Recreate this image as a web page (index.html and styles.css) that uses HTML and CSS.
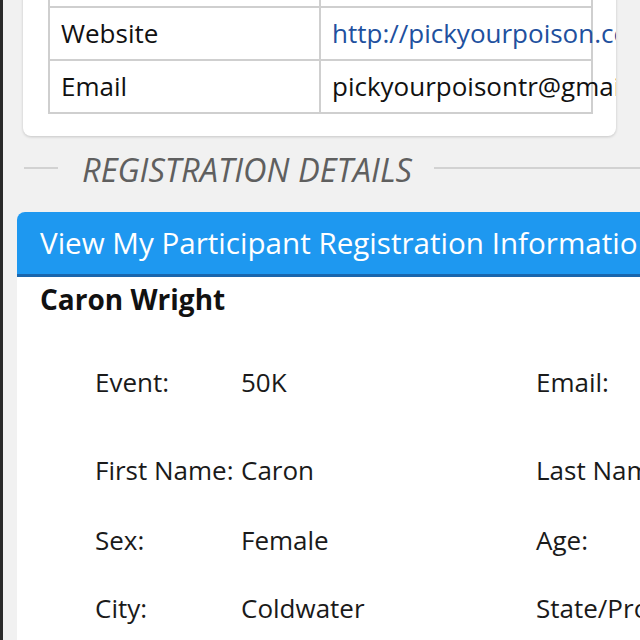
FILE: index.html
```html
<!DOCTYPE html>
<html>
<head>
<meta charset="utf-8">
<link rel="stylesheet" href="styles.css">
</head>
<body>
<div class="screen">
  <div class="card">
    <table class="info">
      <tr class="prev"><td></td><td></td></tr>
      <tr><td>Website</td><td><span class="link">http://pickyourpoison.com</span></td></tr>
      <tr><td>Email</td><td>pickyourpoisontr@gmail.com</td></tr>
    </table>
  </div>
  <div class="section-title">
    <span class="rule short"></span>
    <span class="title-text">REGISTRATION DETAILS</span>
    <span class="rule long"></span>
  </div>
  <div class="panel">
    <div class="panel-head">View My Participant Registration Information</div>
    <div class="panel-body">
      <div class="name">Caron Wright</div>
      <div class="details">
        <div class="row first">
          <span class="label">Event:</span><span class="value">50K</span><span class="label2">Email:</span>
        </div>
        <div class="row">
          <span class="label">First Name:</span><span class="value">Caron</span><span class="label2">Last Name:</span>
        </div>
        <div class="row">
          <span class="label">Sex:</span><span class="value">Female</span><span class="label2">Age:</span>
        </div>
        <div class="row">
          <span class="label">City:</span><span class="value">Coldwater</span><span class="label2">State/Province:</span>
        </div>
      </div>
    </div>
  </div>
</div>
</body>
</html>
```

FILE: styles.css
```css
html, body {
  margin: 0;
  padding: 0;
}
body {
  width: 640px;
  height: 640px;
  overflow: hidden;
  background: #f1f1f1;
  font-family: "Open Sans", "Liberation Sans", sans-serif;
  color: #111;
}
.screen {
  border-left: 3px solid #2a2a2a;
  height: 640px;
  box-sizing: border-box;
  padding-left: 14px;
  overflow: hidden;
}
.card {
  margin-left: 6px;
  width: 593px;
  box-sizing: border-box;
  margin-top: -45px;
  background: #fff;
  border-radius: 0 0 8px 8px;
  box-shadow: 0 1px 3px rgba(0,0,0,0.18);
  padding: 0 23px 22px 25px;
  overflow: hidden;
}
.info {
  width: 545px;
  table-layout: fixed;
  border-collapse: collapse;
  font-size: 26px;
}
.info td {
  border: 2px solid #cfcfcf;
  height: 49px;
  padding: 0 0 2px 11px;
  white-space: nowrap;
  overflow: visible;
  vertical-align: middle;
}
.info td:first-child {
  width: 258px;
}
.info tr.prev td {
  border-top: none;
}
.link {
  color: #21509e;
}
.section-title {
  display: flex;
  align-items: center;
  height: 64px;
  margin: 0 0 12px 7px;
}
.rule {
  height: 2px;
  background: #d2d2d2;
}
.rule.short {
  width: 34px;
}
.rule.long {
  flex: 1;
}
.title-text {
  font-style: italic;
  font-weight: 400;
  font-size: 32.6px;
  color: #5f5f5f;
  padding: 0 22px 0 24px;
  white-space: nowrap;
  margin-top: 2px;
}
.panel {
  background: #fff;
  border-radius: 8px 0 0 0;
  height: 460px;
}
.panel-head {
  background: #1e98f0;
  border-bottom: 3px solid #1a66ad;
  border-radius: 8px 0 0 0;
  height: 62px;
  color: #fff;
  font-size: 29.6px;
  line-height: 62px;
  padding-left: 23px;
  white-space: nowrap;
  overflow: hidden;
}
.name {
  font-weight: 700;
  font-size: 28px;
  padding-left: 23px;
  line-height: 44px;
}
.details {
  padding-left: 78px;
  padding-top: 43px;
}
.row {
  display: grid;
  grid-template-columns: 146px 295px 1fr;
  height: 70px;
  align-items: start;
  font-size: 26px;
  color: #1a1a1a;
  white-space: nowrap;
}
.row.first {
  height: 88px;
}
.row:nth-child(3) {
  height: 68px;
}
```
